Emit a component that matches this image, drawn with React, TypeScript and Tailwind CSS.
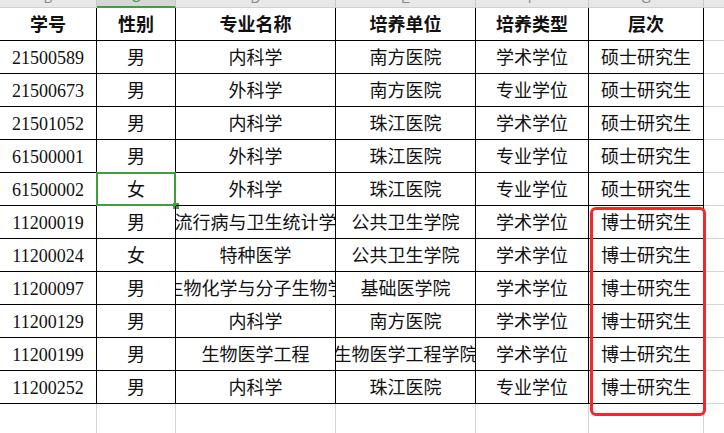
import React from "react";

type Row = [string, string, string, string, string, string];

const columns = [
  { letter: "B", width: "w-[97px]", title: "学号" },
  { letter: "C", width: "w-[79px]", title: "性别" },
  { letter: "D", width: "w-[160px]", title: "专业名称" },
  { letter: "E", width: "w-[140px]", title: "培养单位" },
  { letter: "F", width: "w-[113px]", title: "培养类型" },
  { letter: "G", width: "w-[115px]", title: "层次" },
];

const rows: Row[] = [
  ["21500589", "男", "内科学", "南方医院", "学术学位", "硕士研究生"],
  ["21500673", "男", "外科学", "南方医院", "专业学位", "硕士研究生"],
  ["21501052", "男", "内科学", "珠江医院", "学术学位", "硕士研究生"],
  ["61500001", "男", "外科学", "珠江医院", "专业学位", "硕士研究生"],
  ["61500002", "女", "外科学", "珠江医院", "专业学位", "硕士研究生"],
  ["11200019", "男", "流行病与卫生统计学", "公共卫生学院", "学术学位", "博士研究生"],
  ["11200024", "女", "特种医学", "公共卫生学院", "学术学位", "博士研究生"],
  ["11200097", "男", "生物化学与分子生物学", "基础医学院", "学术学位", "博士研究生"],
  ["11200129", "男", "内科学", "南方医院", "学术学位", "博士研究生"],
  ["11200199", "男", "生物医学工程", "生物医学工程学院", "学术学位", "博士研究生"],
  ["11200252", "男", "内科学", "珠江医院", "专业学位", "博士研究生"],
];

const font = "font-['Liberation_Serif','Noto_Sans_CJK_SC',serif]";

const App: React.FC = () => {
  return (
    <div className={`relative h-[433px] w-[724px] overflow-hidden bg-white text-[18px] text-[#111] ${font}`}>
      {/* column letters band, mostly scrolled off */}
      <div className="flex h-[8px]">
        {columns.map((c) => {
          const active = c.letter === "C";
          return (
            <div
              key={c.letter}
              className={`flex shrink-0 items-end justify-center overflow-hidden border-r border-[#c9c9c9] ${c.width} ${
                active ? "border-b-2 border-b-[#3f9f3f] bg-[#d6d6d6] text-[#3f9f3f]" : "border-b border-b-[#d0d0d0] bg-[#e8e8e8] text-[#8a8a8a]"
              }`}
            >
              <span className="mb-[2px] font-['Liberation_Sans',sans-serif] text-[13px] leading-none">{c.letter}</span>
            </div>
          );
        })}
        <div className="flex-1 border-b border-[#d0d0d0] bg-[#e8e8e8]" />
      </div>

      {/* header row */}
      <div className="flex h-[33px]">
        {columns.map((c) => (
          <div
            key={c.title}
            className={`flex shrink-0 items-center justify-center border-r border-b border-black pt-[3px] font-bold ${c.width}`}
          >
            {c.title}
          </div>
        ))}
        <div className="flex-1 border-b border-[#d4d4d4]" />
      </div>

      {rows.map((r, i) => (
        <div key={r[0]} className="flex h-[33px]">
          {r.map((v, j) => (
            <div
              key={j}
              className={`relative flex shrink-0 items-center justify-center border-r border-b border-black pt-[3px] ${columns[j].width}`}
            >
              <div className="flex w-full justify-center overflow-hidden whitespace-nowrap">
                <span className="shrink-0">{v}</span>
              </div>
              {i === 4 && j === 1 && (
                <>
                  <div className="absolute -top-px -left-px -right-px -bottom-px border-2 border-[#3f9f3f]" />
                  <div className="absolute -right-[4px] -bottom-[4px] h-[6px] w-[6px] bg-[#3f9f3f]" />
                </>
              )}
            </div>
          ))}
          <div className="flex-1 border-b border-[#d4d4d4]" />
        </div>
      ))}

      {/* empty rows below the table */}
      {[0, 1].map((k) => (
        <div key={k} className="flex h-[33px]">
          {columns.map((c) => (
            <div key={c.letter} className={`shrink-0 border-r border-b border-[#d4d4d4] ${c.width}`} />
          ))}
          <div className="flex-1 border-b border-[#d4d4d4]" />
        </div>
      ))}

      {/* red annotation box */}
      <div className="absolute left-[590px] top-[207px] h-[209px] w-[116px] rounded-[6px] border-[3px] border-[#f2262b]" />
    </div>
  );
};

export default App;
